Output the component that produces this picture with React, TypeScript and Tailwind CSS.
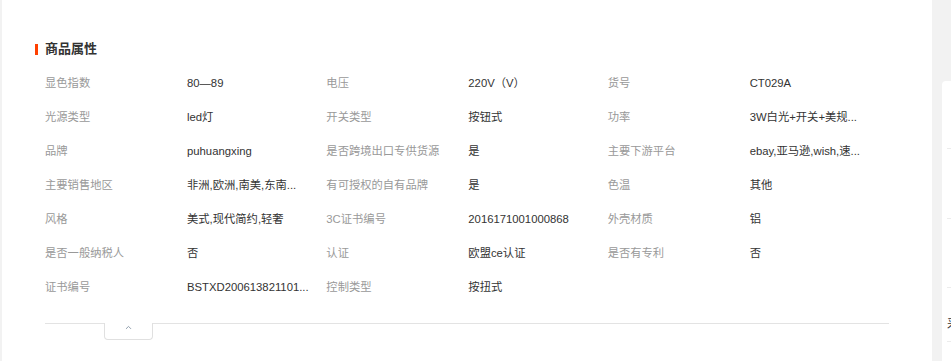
import { ChevronUp } from 'lucide-react';

type Attr = { label: string; value: string };

const attrs: Attr[][] = [
  [
    { label: '显色指数', value: '80—89' },
    { label: '电压', value: '220V（V）' },
    { label: '货号', value: 'CT029A' },
  ],
  [
    { label: '光源类型', value: 'led灯' },
    { label: '开关类型', value: '按钮式' },
    { label: '功率', value: '3W白光+开关+美规...' },
  ],
  [
    { label: '品牌', value: 'puhuangxing' },
    { label: '是否跨境出口专供货源', value: '是' },
    { label: '主要下游平台', value: 'ebay,亚马逊,wish,速...' },
  ],
  [
    { label: '主要销售地区', value: '非洲,欧洲,南美,东南...' },
    { label: '有可授权的自有品牌', value: '是' },
    { label: '色温', value: '其他' },
  ],
  [
    { label: '风格', value: '美式,现代简约,轻奢' },
    { label: '3C证书编号', value: '2016171001000868' },
    { label: '外壳材质', value: '铝' },
  ],
  [
    { label: '是否一般纳税人', value: '否' },
    { label: '认证', value: '欧盟ce认证' },
    { label: '是否有专利', value: '否' },
  ],
  [
    { label: '证书编号', value: 'BSTXD200613821101...' },
    { label: '控制类型', value: '按扭式' },
  ],
];

const font = { fontFamily: '"Liberation Sans", "Noto Sans CJK SC", sans-serif' };

export default function App() {
  return (
    <div className="flex w-[951px] h-[361px] overflow-hidden bg-[#f2f2f2]" style={font}>
      <main className="ml-[2px] w-[930px] shrink-0 h-full bg-white pt-[39px]">
        <div className="flex items-center h-[20px] pl-[33px]">
          <span className="w-[3px] h-[11px] bg-[#ff4000]" />
          <h2 className="ml-[7px] text-[13px] font-bold text-[#333]">商品属性</h2>
        </div>

        <div className="ml-[43px] w-[844px] mt-[7px]">
          {attrs.map((row, i) => (
            <div key={i} className="grid grid-cols-3 h-[34px] items-center text-[11.3px]">
              {row.map((a) => (
                <div key={a.label} className="flex items-center">
                  <span className="w-[142px] shrink-0 text-[#999] whitespace-nowrap">{a.label}</span>
                  <span className="text-[#333] whitespace-nowrap">{a.value}</span>
                </div>
              ))}
            </div>
          ))}

          <div className="relative mt-[19px] border-t border-[#e3e3e3]">
            <button
              type="button"
              className="absolute left-[59px] -top-px w-[49px] h-[17px] flex justify-center bg-white border border-t-0 border-[#e0e0e0] rounded-b-[4px]"
            >
              <ChevronUp className="w-[9px] h-[9px] text-[#8a99a8]" strokeWidth={2.5} />
            </button>
          </div>
        </div>
      </main>

      <aside className="w-[19px] shrink-0 pl-[10px] pt-[81px]">
        <div className="h-full w-[9px] bg-white rounded-tl-[4px] pl-[5px] overflow-hidden">
          <div className="h-[68px] border-b border-[#ececec]" />
          <div className="h-[70px] border-b border-[#ececec]" />
          <div className="h-[69px] border-b border-[#ececec]" />
          <div className="h-[54px] border-b border-[#ececec] flex items-end pb-[8px]">
            <span className="text-[12px] text-[#333] whitespace-nowrap">采购</span>
          </div>
        </div>
      </aside>
    </div>
  );
}
